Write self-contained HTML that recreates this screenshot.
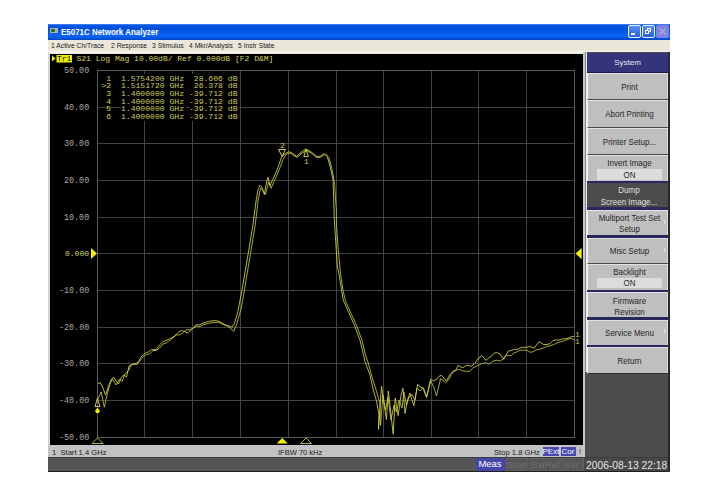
<!DOCTYPE html>
<html><head><meta charset="utf-8">
<style>
html,body{margin:0;padding:0;background:#fff;}
body{width:721px;height:485px;overflow:hidden;position:relative;font-family:"Liberation Sans",sans-serif;}
*{box-sizing:border-box;}
.a{position:absolute;}
.mn{position:absolute;top:40px;height:12px;line-height:12px;font-size:7.6px;color:#181818;white-space:nowrap;transform:scaleX(0.89);transform-origin:0 0;}
.sk{position:absolute;left:587px;width:81px;background:#bfbfbf;border-left:1px solid #f4f4f4;border-bottom:1px solid #4a4a4a;box-shadow:inset 0 1px 0 #e2e2e2,inset -1px 0 0 #dcdcdc;}
.sk span{position:absolute;left:1.5px;right:-0.5px;text-align:center;font-size:8.6px;color:#262626;white-space:nowrap;line-height:8px;transform:scaleX(0.93);}
.nv{position:absolute;left:587px;width:81px;background:#28285e;}
.on{position:absolute;left:9.3px;width:65px;height:11px;background:#dcdcdc;}
.on span{left:-0.5px !important;right:0.5px !important;}
.arr{position:absolute;left:76px;width:0;height:0;border-top:3px solid transparent;border-bottom:3px solid transparent;border-left:2.5px solid #dedede;}
</style></head><body>

<!-- title bar -->
<div class="a" style="left:48px;top:24px;width:622px;height:16px;background:linear-gradient(to bottom,#4a8ef8 0px,#0a56e2 1.5px,#0050da 5px,#085cec 9px,#0c66f8 12px,#0052d8 14.5px,#0044c4 16px);"></div>
<div class="a" style="left:49.5px;top:28.3px;width:8.3px;height:4.5px;background:#a8b0a8;"></div>
<div class="a" style="left:50.5px;top:29px;width:4.5px;height:3px;background:#207020;border-radius:1px;"></div>
<div class="a" style="left:61px;top:26px;height:12px;line-height:12px;font-size:9.2px;font-weight:bold;color:#fff;white-space:nowrap;transform:scaleX(0.865);transform-origin:0 0;">E5071C Network Analyzer</div>
<!-- buttons -->
<div class="a" style="left:628px;top:25px;width:12.5px;height:13px;border:1px solid #e8f0ff;border-radius:2px;background:linear-gradient(to bottom,#5a8cf8,#2a5ee8);"></div>
<div class="a" style="left:631px;top:33px;width:4px;height:2px;background:#fff;"></div>
<div class="a" style="left:642px;top:25px;width:12.5px;height:13px;border:1px solid #e8f0ff;border-radius:2px;background:linear-gradient(to bottom,#5a8cf8,#2a5ee8);"></div>
<div class="a" style="left:646.5px;top:28px;width:4.5px;height:4px;border:1px solid #fff;border-top-width:1.5px;"></div>
<div class="a" style="left:644.5px;top:30px;width:4.5px;height:4px;border:1px solid #fff;border-top-width:1.5px;background:#3a6cf0;"></div>
<div class="a" style="left:656px;top:25px;width:13px;height:13px;border-radius:2px;background:#7c84e0;"></div>
<svg class="a" style="left:656px;top:25px" width="13" height="13"><path d="M3.5 3.5L9.5 9.5M9.5 3.5L3.5 9.5" stroke="#a4aad8" stroke-width="1.4"/></svg>

<!-- menu bar -->
<div class="a" style="left:48px;top:40px;width:622px;height:13.5px;background:linear-gradient(to bottom,#e8eef0 0,#ece6d8 1px,#e8e6d8 10px,#f4f2ea 11.5px,#f0eee4 13px);"></div>
<div class="mn" style="left:51px;">1 Active Ch/Trace</div>
<div class="mn" style="left:110.5px;">2 Response</div>
<div class="mn" style="left:152px;">3 Stimulus</div>
<div class="mn" style="left:188.5px;">4 Mkr/Analysis</div>
<div class="mn" style="left:237.5px;">5 Instr State</div>

<!-- left frame & plot bg -->
<div class="a" style="left:48px;top:53px;width:2.5px;height:404px;background:#d4d4d4;"></div>
<div class="a" style="left:50px;top:53.5px;width:533px;height:391.5px;background:#000;"></div>

<!-- plot svg -->
<svg class="a" style="left:0;top:0" width="721" height="485">
<g stroke="#424242" stroke-width="1" fill="none">
<line x1="144.5" y1="70.5" x2="144.5" y2="437.5"/>
<line x1="192.5" y1="70.5" x2="192.5" y2="437.5"/>
<line x1="240.5" y1="70.5" x2="240.5" y2="437.5"/>
<line x1="288.5" y1="70.5" x2="288.5" y2="437.5"/>
<line x1="336.5" y1="70.5" x2="336.5" y2="437.5"/>
<line x1="383.5" y1="70.5" x2="383.5" y2="437.5"/>
<line x1="431.5" y1="70.5" x2="431.5" y2="437.5"/>
<line x1="478.5" y1="70.5" x2="478.5" y2="437.5"/>
<line x1="526.5" y1="70.5" x2="526.5" y2="437.5"/>
<line x1="97.5" y1="107.5" x2="574.5" y2="107.5"/>
<line x1="97.5" y1="143.5" x2="574.5" y2="143.5"/>
<line x1="97.5" y1="180.5" x2="574.5" y2="180.5"/>
<line x1="97.5" y1="217.5" x2="574.5" y2="217.5"/>
<line x1="97.5" y1="253.5" x2="574.5" y2="253.5"/>
<line x1="97.5" y1="290.5" x2="574.5" y2="290.5"/>
<line x1="97.5" y1="327.5" x2="574.5" y2="327.5"/>
<line x1="97.5" y1="363.5" x2="574.5" y2="363.5"/>
<line x1="97.5" y1="400.5" x2="574.5" y2="400.5"/>
</g>
<rect x="97.5" y="70.5" width="477" height="367" fill="none" stroke="#5a5a5a" stroke-width="1"/>
<g font-family="Liberation Mono" font-size="8.4px" fill="#a8a8a8" text-anchor="end">
<text x="89.2" y="72.5">50.00</text>
<text x="89.2" y="109.5">40.00</text>
<text x="89.2" y="145.5">30.00</text>
<text x="89.2" y="182.5">20.00</text>
<text x="89.2" y="219.5">10.00</text>
<text x="89.2" y="292.5">-10.00</text>
<text x="89.2" y="329.5">-20.00</text>
<text x="89.2" y="365.5">-30.00</text>
<text x="89.2" y="402.5">-40.00</text>
<text x="89.2" y="439.5">-50.00</text>
</g>
<text x="89" y="256" font-family="Liberation Mono" font-size="8px" fill="#d8d850" text-anchor="end">0.000</text>
<path d="M91 248L97 253.5L91 259Z" fill="#f0f000"/>
<path d="M581.7 248L575.6 253.5L581.7 259.2Z" fill="#f0f000"/>

<!-- header -->
<path d="M52 55.5L55.5 58.5L52 61.5Z" fill="#f0f000"/>
<rect x="56.5" y="55" width="15.5" height="7.5" fill="#f0f000"/>
<g font-family="Liberation Mono" font-size="8px">
<text x="57" y="61.3" fill="#000">Tr1</text>
<text x="76.5" y="61.3" fill="#d4d452">S21 Log Mag 10.00dB/ Ref 0.000dB [F2 D&amp;M]</text>
</g>
<!-- marker table -->
<rect x="120.5" y="74" width="66" height="47" fill="#000"/>
<rect x="189.5" y="74" width="50" height="47" fill="#000"/>
<g font-family="Liberation Mono" font-size="8.1px" fill="#cccc58" style="white-space:pre">
<text x="101.5" y="80.5" xml:space="preserve"> 1  1.5754200 GHz  28.606 dB</text>
<text x="101.5" y="88.2" xml:space="preserve">&gt;2  1.5151720 GHz  26.378 dB</text>
<text x="101.5" y="95.9" xml:space="preserve"> 3  1.4000000 GHz -39.712 dB</text>
<text x="101.5" y="103.6" xml:space="preserve"> 4  1.4000000 GHz -39.712 dB</text>
<text x="101.5" y="111.3" xml:space="preserve"> 5  1.4000000 GHz -39.712 dB</text>
<text x="101.5" y="119" xml:space="preserve"> 6  1.4000000 GHz -39.712 dB</text>
</g>

<!-- traces -->
<polyline points="97.6,400.0 101.2,391.8 104.3,407.3 107.2,394.0 110.0,384.0 112.5,379.0 116.0,385.0 119.5,379.0 122.0,381.5 125.0,374.0 129.0,370.0 131.0,365.0 139.0,362.0 143.0,357.0 146.3,354.7 149.7,353.7 153.0,350.6 156.3,350.4 159.6,348.0 162.9,344.0 166.2,343.1 169.5,340.5 172.8,338.1 176.1,335.1 179.4,334.8 182.7,333.2 186.0,329.8 189.3,329.8 192.9,328.5 196.4,326.1 200.0,326.5 203.3,324.7 209.9,323.0 218.0,322.2 223.9,324.7 228.0,326.3 233.8,331.3 237.1,323.0 241.2,308.2 244.5,290.0 245.9,281.0 250.5,253.6 255.0,226.4 257.0,210.0 258.1,200.0 260.6,188.3 262.4,189.6 265.5,194.5 268.6,182.1 271.1,188.3 274.8,179.7 279.2,169.7 282.9,159.8 286.0,154.3 290.0,153.0 297.0,157.5 301.0,154.0 306.0,150.6 311.0,152.8 316.0,157.2 320.0,157.5 325.5,153.9 328.8,157.2 332.1,169.6 334.6,184.5 336.3,210.0 336.5,224.8 338.2,249.5 339.8,266.0 340.7,275.0 343.2,291.5 345.7,301.4 351.5,314.6 357.2,327.0 362.2,341.0 365.5,355.0 368.2,363.2 372.3,378.0 376.5,391.2 379.8,402.8 380.5,425.4 383.0,395.0 385.5,410.0 388.0,397.0 391.0,420.0 394.0,405.0 396.5,412.0 399.0,400.0 402.0,408.0 404.0,392.0 406.5,405.0 409.0,397.0 412.0,394.5 415.0,400.0 417.0,388.0 420.0,391.0 422.7,387.9 426.6,397.6 430.7,381.0 433.6,386.6 436.5,395.9 440.6,378.6 443.1,380.3 445.6,382.7 448.5,380.0 451.4,374.5 454.1,371.2 456.9,369.9 459.6,369.5 462.9,370.9 466.2,371.2 469.5,371.5 472.8,367.9 476.1,366.6 479.4,364.6 482.7,363.3 486.0,362.9 489.3,364.2 492.6,361.3 496.3,360.2 500.0,361.2 502.8,359.3 505.6,355.7 508.4,355.2 511.1,355.7 513.9,353.0 516.7,352.0 520.4,350.1 524.1,350.1 526.9,350.3 529.7,352.1 532.5,352.0 536.2,349.8 539.9,349.2 543.1,348.0 546.4,346.4 550.1,345.8 553.8,344.5 557.5,342.8 561.2,341.7 564.9,340.5 568.6,339.0 571.4,338.4 574.2,339.9" fill="none" stroke="#c4c43a" stroke-width="0.85" stroke-linejoin="round"/>
<polyline points="97.9,383.8 100.2,382.5 103.0,388.0 105.5,395.0 108.5,386.0 111.0,380.0 113.5,377.0 116.0,381.0 118.5,384.0 121.5,377.0 124.0,375.0 126.5,377.0 129.0,366.0 133.0,364.0 137.0,364.5 141.0,357.0 144.5,353.6 147.9,352.2 151.4,349.6 156.3,349.6 159.6,345.0 162.9,341.4 166.2,340.5 169.5,338.9 172.8,337.3 176.0,334.8 179.3,331.2 182.7,330.6 187.7,333.1 192.6,328.2 196.3,324.8 200.0,324.9 201.6,323.8 208.2,321.4 215.6,320.5 219.8,321.7 224.7,324.7 232.1,327.1 234.6,323.0 237.9,311.5 242.0,290.0 248.2,253.6 252.7,226.4 256.2,200.0 258.1,189.6 260.0,185.2 261.8,187.0 264.3,194.5 266.8,180.9 268.0,177.2 269.9,185.8 272.0,181.0 276.7,171.0 279.8,162.3 281.6,156.7 285.4,153.6 288.5,151.8 291.0,152.4 296.9,156.4 300.0,153.1 305.7,149.0 310.7,151.5 316.5,156.4 319.8,156.4 323.9,153.9 327.2,156.4 330.5,168.0 333.0,179.5 333.6,196.0 334.2,216.5 335.7,241.3 337.3,266.0 339.1,275.0 341.6,289.9 343.2,299.8 348.2,311.3 354.8,326.2 359.7,339.4 362.0,348.0 364.9,361.5 369.9,374.7 373.2,389.6 376.5,401.1 378.9,414.3 378.5,429.3 381.5,386.2 384.0,404.0 386.4,419.5 388.3,391.0 390.5,410.0 393.2,434.2 395.2,398.0 398.1,415.6 401.0,395.0 403.0,388.1 405.0,413.6 407.5,400.0 409.9,393.0 413.8,405.8 417.7,384.2 420.0,387.0 423.6,388.1 426.6,397.0 430.5,379.3 433.5,380.8 436.5,379.4 439.0,376.3 441.5,375.3 446.4,381.0 449.7,374.9 453.0,371.2 455.5,370.5 458.0,365.4 462.9,367.9 466.2,365.4 468.7,365.7 471.2,366.2 474.5,364.0 477.8,358.8 481.9,355.5 486.0,360.4 488.8,357.8 491.5,356.1 494.3,353.0 497.1,352.7 500.0,354.0 503.7,359.4 508.3,351.0 511.5,350.4 514.8,349.2 517.3,349.5 519.8,348.0 522.3,347.3 526.0,347.4 529.7,346.4 534.3,348.2 539.0,341.7 543.6,344.5 546.9,344.5 550.1,343.6 552.9,340.7 555.7,339.9 559.0,340.1 562.2,339.0 565.4,338.7 568.6,338.0 571.4,336.6 574.2,336.2" fill="none" stroke="#d4d444" stroke-width="0.85" stroke-linejoin="round"/>

<!-- markers -->
<g stroke="#e0e050" fill="none" stroke-width="0.9">
<path d="M97.4 398.5L95 406.5L100 406.5Z"/>
<path d="M278.5 149.5L285.5 149.5L282.2 156.5Z"/>
<path d="M306 149.2L303.8 156.6L308.4 156.6Z"/>
</g>
<path d="M97.5 407.5L100 411L98.8 413L96.2 413L95 411Z" fill="#f0f000"/>
<g font-family="Liberation Mono" font-size="8px" fill="#d4d450" text-anchor="middle">
<text x="282.4" y="148">2</text>
<text x="306.3" y="163.6">1</text>
<text x="577.5" y="337" fill="#c8c848">1</text>
<text x="577.5" y="343.8" fill="#c8c848">1</text>
</g>
<!-- bottom stimulus triangles -->
<path d="M97.5 438L92 443.5L103 443.5Z" fill="none" stroke="#c0c048" stroke-width="0.9"/>
<path d="M282.2 438L276.6 443.5L287.8 443.5Z" fill="#f0f000"/>
<path d="M306 438L300.5 443.5L311.5 443.5Z" fill="none" stroke="#c0c048" stroke-width="0.9"/>
</svg>

<!-- status bar 1 -->
<div class="a" style="left:48px;top:445px;width:535.5px;height:12px;background:#c2c2c2;"></div>
<div class="a" style="left:52px;top:447.5px;height:9px;line-height:9px;font-size:8px;color:#202020;white-space:nowrap;transform:scaleX(0.95);transform-origin:0 0;">1&nbsp;&nbsp;Start 1.4 GHz</div>
<div class="a" style="left:277.5px;top:447.5px;height:9px;line-height:9px;font-size:8px;color:#202020;white-space:nowrap;transform:scaleX(0.94);transform-origin:0 0;">IFBW 70 kHz</div>
<div class="a" style="left:493.5px;top:447.5px;height:9px;line-height:9px;font-size:8px;color:#202020;white-space:nowrap;transform:scaleX(0.955);transform-origin:0 0;">Stop 1.8 GHz</div>
<div class="a" style="left:542.5px;top:446.5px;width:16px;height:9px;background:#4848b0;color:#fff;font-size:8px;line-height:9px;text-align:center;">PExt</div>
<div class="a" style="left:560.5px;top:446.5px;width:15px;height:9px;background:#4848b0;color:#fff;font-size:8px;line-height:9px;text-align:center;">Cor</div>
<div class="a" style="left:579px;top:447px;font-size:7px;line-height:9px;color:#303030;">!</div>

<!-- status bar 2 -->
<div class="a" style="left:48px;top:456.5px;width:622px;height:15px;background:#555;border-top:1.5px solid #3c3c3c;border-bottom:1px solid #202020;"></div>
<div class="a" style="left:475.5px;top:458px;width:29px;height:12.5px;background:#4646a8;color:#fff;font-size:9.5px;line-height:12.5px;text-align:center;">Meas</div>
<div class="a" style="left:505.5px;top:458px;width:22px;height:12.5px;border:1px solid #606060;color:#707070;font-size:9.5px;line-height:11px;text-align:center;">Stop</div>
<div class="a" style="left:529.5px;top:458px;width:32px;height:12.5px;border:1px solid #606060;color:#707070;font-size:9.5px;line-height:11px;text-align:center;">ExtRef</div>
<div class="a" style="left:562.5px;top:458px;width:20px;height:12.5px;border:1px solid #606060;color:#707070;font-size:9.5px;line-height:11px;text-align:center;">Svc</div>
<div class="a" style="left:583px;top:457.5px;width:85px;height:13px;border-left:1px solid #606060;background:#484848;"></div>
<div class="a" style="left:585.5px;top:458.6px;height:13px;color:#e4e4e4;font-size:11px;line-height:13px;white-space:nowrap;transform:scaleX(0.935);transform-origin:0 0;">2006-08-13 22:18</div>

<!-- softkey panel -->
<div class="a" style="left:583.5px;top:52px;width:86.5px;height:404.5px;background:#4c4c4c;"></div>
<div class="a" style="left:583px;top:52px;width:2.2px;height:404.5px;background:#c8c8c8;"></div>
<div class="a" style="left:585.2px;top:52px;width:0.8px;height:320px;background:#808090;"></div>
<div class="a" style="left:586px;top:52px;width:1px;height:320px;background:#f0f0f0;"></div>
<div class="a" style="left:668px;top:52px;width:2px;height:420px;background:#282830;"></div>

<div class="nv" style="top:52.5px;height:20px;background:#34347a;border-bottom:1px solid #1a1a4a;"><span style="position:absolute;left:0;right:0;top:6px;text-align:center;font-size:8px;line-height:8px;color:#e8e8f0;">System</span></div>
<div class="sk" style="top:73px;height:27px;"><span style="top:9.5px;">Print</span></div>
<div class="sk" style="top:100.3px;height:27.3px;"><span style="top:10px;">Abort Printing</span></div>
<div class="sk" style="top:127.6px;height:27.4px;"><span style="top:10px;">Printer Setup...</span></div>
<div class="sk" style="top:155px;height:25.5px;border-bottom:none;"><span style="top:4px;">Invert Image</span><div class="on" style="top:13.5px;"><span style="top:2px;">ON</span></div></div>
<div class="nv" style="top:180.5px;height:2.8px;"></div>
<div class="sk" style="top:183.3px;height:23.9px;background:#4c4c4c;border:none;box-shadow:none;"><span style="top:3.2px;color:#e0e0e0;">Dump</span><span style="top:14.7px;color:#e0e0e0;">Screen Image...</span></div>
<div class="nv" style="top:207.2px;height:2.8px;"></div>
<div class="sk" style="top:210px;height:25px;border-bottom:none;"><span style="top:4px;">Multiport Test Set</span><span style="top:15px;">Setup</span><div class="arr" style="top:8.5px;"></div></div>
<div class="nv" style="top:235px;height:2.8px;"></div>
<div class="sk" style="top:237.8px;height:26px;"><span style="top:9px;">Misc Setup</span><div class="arr" style="top:9px;"></div></div>
<div class="sk" style="top:263.8px;height:26px;border-bottom:none;"><span style="top:4.6px;">Backlight</span><div class="on" style="top:13.8px;height:10.2px;"><span style="top:1.6px;">ON</span></div></div>
<div class="nv" style="top:289.8px;height:2.5px;"></div>
<div class="sk" style="top:292.3px;height:25px;border-bottom:none;"><span style="top:4.8px;">Firmware</span><span style="top:15.3px;">Revision</span></div>
<div class="nv" style="top:317.3px;height:2.5px;"></div>
<div class="sk" style="top:319.8px;height:25px;border-bottom:none;"><span style="top:9.5px;">Service Menu</span><div class="arr" style="top:8.5px;"></div></div>
<div class="nv" style="top:344.8px;height:2.5px;"></div>
<div class="sk" style="top:347.3px;height:26.6px;border-bottom:1.5px solid #303030;"><span style="top:9.4px;">Return</span></div>

</body></html>
